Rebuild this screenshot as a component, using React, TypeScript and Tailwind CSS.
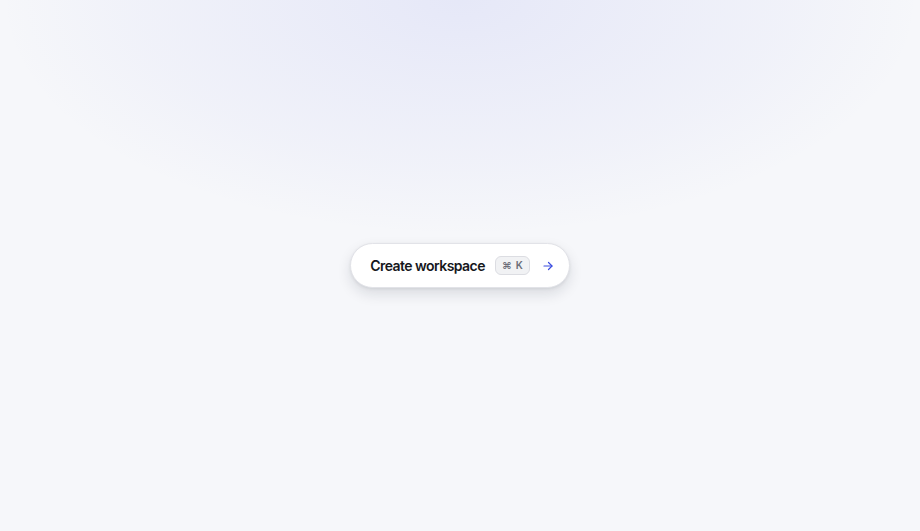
export default function App() {
  return (
    <div
      className="relative min-h-screen w-full bg-[#f6f7fa] flex items-center justify-center"
      style={{ fontFamily: 'Inter, "Noto Sans", sans-serif' }}
    >
      {/* soft glow at top */}
      <div className="pointer-events-none absolute inset-0 bg-[radial-gradient(ellipse_460px_235px_at_50%_0%,rgba(99,110,230,0.11),rgba(99,110,230,0.04)_70%,transparent_100%)]" />

      <button className="relative flex h-[45px] items-center rounded-full border border-[#e2e3e8] bg-white pl-[19px] pr-[15px] shadow-[0_6px_14px_rgba(15,23,42,0.12),0_1px_3px_rgba(15,23,42,0.08)]">
        <span className="text-[14px] font-semibold tracking-[-0.55px] text-[#16171c]">Create workspace</span>
        <span className="ml-[10px] flex h-[19px] items-center gap-[4px] rounded-md border border-[#dcdde2] bg-[#f1f2f4] px-[6px] text-[10px] font-semibold text-[#6b6e78]">
          <span>⌘</span>
          <span>K</span>
        </span>
        <svg
          className="ml-3"
          width="12"
          height="12"
          viewBox="0 0 24 24"
          fill="none"
          stroke="#3b4de0"
          strokeWidth="2.4"
          strokeLinecap="round"
          strokeLinejoin="round"
        >
          <path d="M4 12h16" />
          <path d="M13 5l7 7-7 7" />
        </svg>
      </button>
    </div>
  );
}
